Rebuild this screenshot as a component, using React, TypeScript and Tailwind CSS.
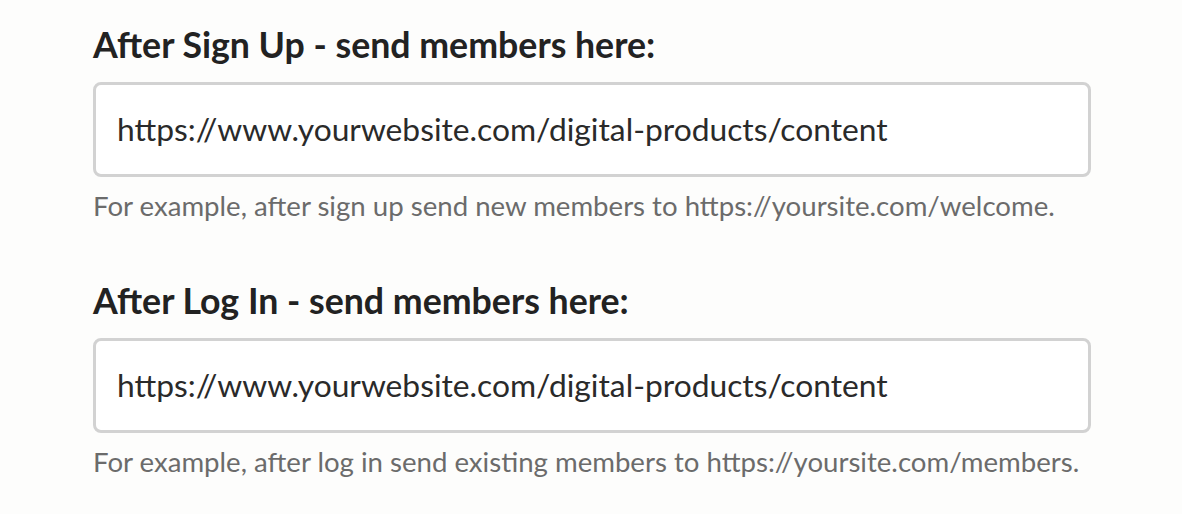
import React from 'react';

const Field: React.FC<{ label: string; value: string; hint: string }> = ({ label, value, hint }) => {
  return (
    <div className="flex flex-col">
      <label className="text-[35.7px] leading-[44px] font-bold text-[#222222]">{label}</label>
      <div className="mt-[15px] w-[998px] h-[95px] flex items-center pl-[21px] pr-[21px] bg-white border-[3px] border-[#d2d2d2] rounded-[8px]">
        <span className="text-[31.75px] text-[#2a2a2a]">{value}</span>
      </div>
      <p className="mt-[13px] text-[27.6px] leading-[32px] text-[#6b6b6b]">{hint}</p>
    </div>
  );
};

const App: React.FC = () => {
  return (
    <div
      className="w-[1182px] h-[514px] bg-[#fdfdfc] pl-[93px] pt-[23px] flex flex-col gap-[57px]"
      style={{ fontFamily: 'Lato, "Noto Sans", sans-serif' }}
    >
      <Field
        label="After Sign Up - send members here:"
        value="https://www.yourwebsite.com/digital-products/content"
        hint="For example, after sign up send new members to https://yoursite.com/welcome."
      />
      <Field
        label="After Log In - send members here:"
        value="https://www.yourwebsite.com/digital-products/content"
        hint="For example, after log in send existing members to https://yoursite.com/members."
      />
    </div>
  );
};

export default App;
